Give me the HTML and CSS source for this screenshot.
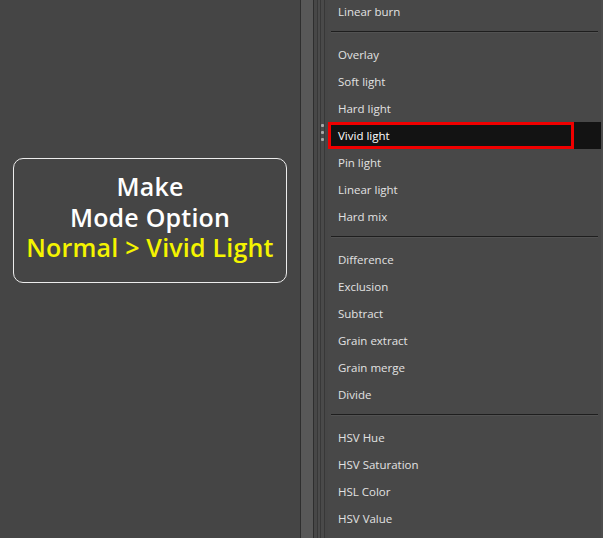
FILE: index.html
```html
<!DOCTYPE html>
<html>
<head>
<meta charset="utf-8">
<link rel="stylesheet" href="styles.css">
</head>
<body>
<div class="page">
  <div class="left">
    <div class="note">
      <div class="line">Make</div>
      <div class="line">Mode Option</div>
      <div class="line hl">Normal &gt; Vivid Light</div>
    </div>
  </div>
  <div class="strip">
    <div class="s s-dark"></div>
    <div class="s s-light"></div>
    <div class="s s-dark"></div>
    <div class="s s-mid3"></div>
    <div class="s s-line"></div>
    <div class="s s-mid2"></div>
    <div class="s s-line"></div>
    <div class="grip-col">
      <div class="grip">
        <span class="dot"></span><span class="dot"></span><span class="dot"></span>
      </div>
    </div>
    <div class="s s-line"></div>
    <div class="s s-mid3"></div>
  </div>
  <div class="menu">
    <ul class="list">
      <li class="item">Linear burn</li>
      <li class="sep"></li>
      <li class="item">Overlay</li>
      <li class="item">Soft light</li>
      <li class="item">Hard light</li>
      <li class="item active"><span class="mark"></span>Vivid light</li>
      <li class="item">Pin light</li>
      <li class="item">Linear light</li>
      <li class="item">Hard mix</li>
      <li class="sep"></li>
      <li class="item">Difference</li>
      <li class="item">Exclusion</li>
      <li class="item">Subtract</li>
      <li class="item">Grain extract</li>
      <li class="item">Grain merge</li>
      <li class="item">Divide</li>
      <li class="sep"></li>
      <li class="item">HSV Hue</li>
      <li class="item">HSV Saturation</li>
      <li class="item">HSL Color</li>
      <li class="item">HSV Value</li>
    </ul>
  </div>
  <div class="edge"></div>
</div>
</body>
</html>
```

FILE: styles.css
```css
html, body {
  margin: 0;
  padding: 0;
  background: #454545;
}
.page {
  display: flex;
  width: 603px;
  height: 538px;
  overflow: hidden;
  background: #454545;
}
.left {
  width: 300px;
  flex: none;
  padding-top: 158px;
  box-sizing: border-box;
}
.note {
  margin-left: 13px;
  width: 274px;
  height: 125px;
  box-sizing: border-box;
  border: 1.5px solid #ececec;
  border-radius: 10px;
  padding-bottom: 7px;
  display: flex;
  flex-direction: column;
  align-items: center;
  justify-content: center;
  font-family: "Open Sans", "Noto Sans", sans-serif;
  font-weight: 600;
  font-size: 25px;
  line-height: 30.5px;
  color: #ffffff;
  letter-spacing: 0.2px;
}
.note .hl {
  color: #f4f400;
}
.strip {
  display: flex;
  flex: none;
  height: 538px;
}
.s { height: 100%; }
.s-dark { width: 1px; background: #2e2e2e; }
.s-light { width: 12px; background: #585858; }
.s-mid3 { width: 3px; background: #474747; }
.s-mid2 { width: 2px; background: #4b4b4b; }
.s-line { width: 1px; background: #383838; }
.grip-col {
  width: 3px;
  background: #4a4a4a;
  position: relative;
}
.grip {
  position: absolute;
  top: 124px;
  left: 0;
  display: flex;
  flex-direction: column;
  gap: 4px;
}
.dot {
  display: block;
  width: 3px;
  height: 3px;
  background: #a8a8a8;
  border-radius: 1px;
}
.menu {
  width: 273px;
  flex: none;
  background: #484848;
  font-family: "Open Sans", "Noto Sans", sans-serif;
  font-size: 11.5px;
  color: #e2e2e2;
}
.list {
  list-style: none;
  margin: -2.5px 0 0 0;
  padding: 0;
}
.item {
  height: 27px;
  line-height: 27px;
  padding-left: 10px;
  position: relative;
  white-space: nowrap;
}
.item.active {
  background: #131313;
  color: #ffffff;
}
.mark {
  position: absolute;
  left: 0;
  top: 0;
  width: 246px;
  height: 27px;
  box-sizing: border-box;
  border: 3px solid #f00000;
}
.sep {
  height: 16px;
  position: relative;
}
.sep::after {
  content: "";
  position: absolute;
  left: 3px;
  right: 3px;
  top: 6px;
  height: 1px;
  background: #1e1e1e;
  box-shadow: 0 1px 0 #525252;
}
.edge {
  flex: 1;
  background: #4d4d4d;
}
```
